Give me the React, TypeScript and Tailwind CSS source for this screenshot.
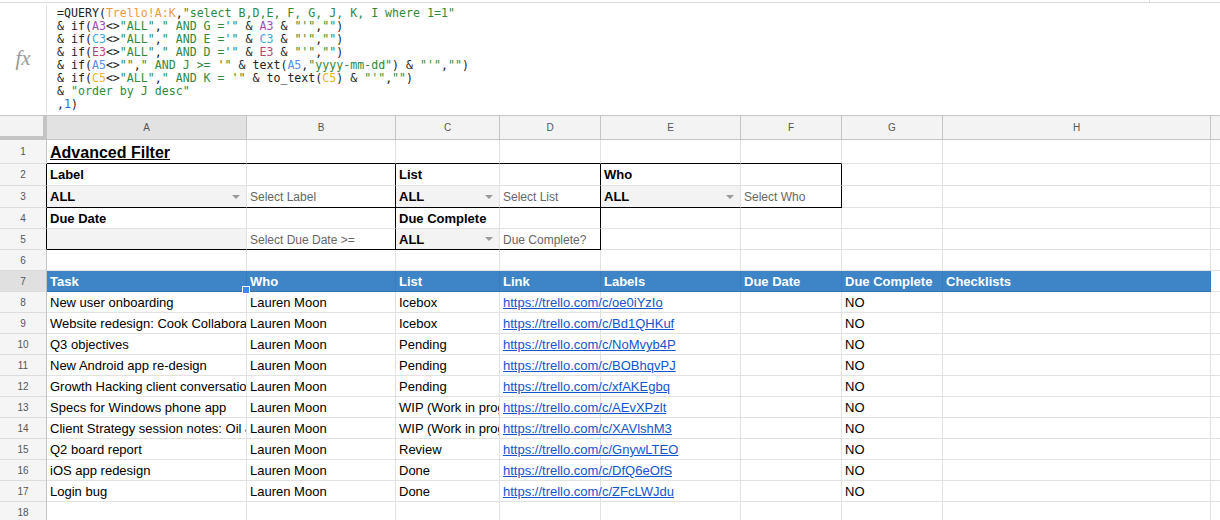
import React from 'react';

const colW = ['w-[200px]', 'w-[149px]', 'w-[104px]', 'w-[101px]', 'w-[140px]', 'w-[101px]', 'w-[101px]', 'w-[268px]'];
const letters = ['A', 'B', 'C', 'D', 'E', 'F', 'G', 'H'];

type Kind = 'plain' | 'bold' | 'title' | 'ph' | 'dd' | 'date' | 'link' | 'head';
type C = { t?: string; k?: Kind; rb?: boolean; bb?: boolean };
type Row = { n: number; h: string; cells: C[]; rhBlack?: boolean; sel?: boolean };

const textCls: Record<Kind, string> = {
  plain: 'text-[13px] text-black',
  bold: 'text-[13px] font-bold text-black',
  title: 'text-[16px] font-bold underline text-black pt-[2px]',
  ph: 'text-[12px] text-[#666]',
  dd: 'text-[13px] font-bold text-black',
  date: 'text-[13px] text-black',
  link: 'text-[13px] text-[#1155cc] underline',
  head: 'text-[13px] font-bold text-white',
};

const Cell = ({ c, i, sel, low }: { c: C; i: number; sel?: boolean; low?: boolean }) => {
  const k = c.k ?? 'plain';
  const head = k === 'head';
  const dd = k === 'dd';
  // links spill into the empty Labels column, like Sheets does
  const spill = k === 'link';
  return (
    <div
      className={`relative shrink-0 ${colW[i]} flex items-center border-r border-b ${low ? 'pt-[2px]' : ''} ${
        c.rb ? 'border-r-black' : head ? 'border-r-[#3a7cba]' : 'border-r-[#e2e2e2]'
      } ${c.bb ? 'border-b-black' : head ? 'border-b-[#3272ad]' : 'border-b-[#e2e2e2]'} ${
        head ? 'bg-[#3d85c6]' : dd || k === 'date' ? 'bg-[#f3f3f3]' : ''
      }`}
    >
      <span
        className={`block whitespace-nowrap px-[3px] leading-[16px] ${textCls[k]} ${
          spill ? 'relative z-[1] overflow-visible' : 'w-full overflow-hidden'
        }`}
      >
        {c.t}
      </span>
      {dd && (
        <svg className="absolute right-[6px] top-1/2 -translate-y-1/2" width="8" height="4" viewBox="0 0 8 4">
          <path d="M0 0h8L4 4z" fill="#9a9a9a" />
        </svg>
      )}
      {sel && <div className="absolute -right-[4px] -bottom-[3px] z-10 h-[8px] w-[8px] border border-white bg-[#4285f4]" />}
    </div>
  );
};

const e: C = {};
const tasks: [string, string, string][] = [
  ['New user onboarding', 'Icebox', 'oe0iYzIo'],
  ['Website redesign: Cook Collaborative', 'Icebox', 'Bd1QHKuf'],
  ['Q3 objectives', 'Pending', 'NoMvyb4P'],
  ['New Android app re-design', 'Pending', 'BOBhqvPJ'],
  ['Growth Hacking client conversation', 'Pending', 'xfAKEgbq'],
  ['Specs for Windows phone app', 'WIP (Work in progress)', 'AEvXPzlt'],
  ['Client Strategy session notes: Oil & Gas', 'WIP (Work in progress)', 'XAVlshM3'],
  ['Q2 board report', 'Review', 'GnywLTEO'],
  ['iOS app redesign', 'Done', 'DfQ6eOfS'],
  ['Login bug', 'Done', 'ZFcLWJdu'],
];

const rows: Row[] = [
  {
    n: 1,
    h: 'h-[24px]',
    cells: [
      { t: 'Advanced Filter', k: 'title', bb: true },
      { bb: true },
      { bb: true },
      { bb: true },
      { bb: true },
      { bb: true },
      e,
      e,
    ],
  },
  {
    n: 2,
    h: 'h-[22px]',
    rhBlack: true,
    cells: [
      { t: 'Label', k: 'bold' },
      { rb: true },
      { t: 'List', k: 'bold' },
      { rb: true },
      { t: 'Who', k: 'bold' },
      { rb: true },
      e,
      e,
    ],
  },
  {
    n: 3,
    h: 'h-[22px]',
    rhBlack: true,
    cells: [
      { t: 'ALL', k: 'dd', bb: true },
      { t: 'Select Label', k: 'ph', rb: true, bb: true },
      { t: 'ALL', k: 'dd', bb: true },
      { t: 'Select List', k: 'ph', rb: true, bb: true },
      { t: 'ALL', k: 'dd', bb: true },
      { t: 'Select Who', k: 'ph', rb: true, bb: true },
      e,
      e,
    ],
  },
  {
    n: 4,
    h: 'h-[21px]',
    rhBlack: true,
    cells: [{ t: 'Due Date', k: 'bold' }, { rb: true }, { t: 'Due Complete', k: 'bold' }, { rb: true }, e, e, e, e],
  },
  {
    n: 5,
    h: 'h-[21px]',
    rhBlack: true,
    cells: [
      { k: 'date', bb: true, t: '' },
      { t: 'Select Due Date >=', k: 'ph', rb: true, bb: true },
      { t: 'ALL', k: 'dd', bb: true },
      { t: 'Due Complete?', k: 'ph', rb: true, bb: true },
      e,
      e,
      e,
      e,
    ],
  },
  { n: 6, h: 'h-[21px]', cells: [e, e, e, e, e, e, e, e] },
  {
    n: 7,
    h: 'h-[21px]',
    sel: true,
    cells: ['Task', 'Who', 'List', 'Link', 'Labels', 'Due Date', 'Due Complete', 'Checklists'].map((t) => ({ t, k: 'head' as Kind })),
  },
  ...tasks.map(([task, list, id], i) => ({
    n: 8 + i,
    h: 'h-[21px]',
    cells: [
      { t: task },
      { t: 'Lauren Moon' },
      { t: list },
      { t: `https://trello.com/c/${id}`, k: 'link' as Kind },
      e,
      e,
      { t: 'NO' },
      e,
    ],
  })),
  { n: 18, h: 'h-[21px]', cells: [e, e, e, e, e, e, e, e] },
];

const or = 'text-[#ee9a3a]';
const pu = 'text-[#a04fb3]';
const cy = 'text-[#3ea8d6]';
const ro = 'text-[#b4497a]';
const bl = 'text-[#5b8ee6]';
const ye = 'text-[#f0b31c]';
const gr = 'text-[#2f8a3a]';
const nb = 'text-[#3367d6]';

const S = ({ c, t }: { c: string; t: string }) => <span className={c}>{t}</span>;

const Formula = () => (
  <div className="whitespace-pre font-['DejaVu_Sans_Mono',monospace] text-[11.6px] leading-[13px] text-[#222]">
    <div>
      {'=QUERY('}
      <S c={or} t="Trello!A:K" />
      {','}
      <S c={gr} t={'"select B,D,E, F, G, J, K, I where 1=1"'} />
    </div>
    <div>
      {'& if('}
      <S c={pu} t="A3" />
      {'<>'}
      <S c={gr} t={'"ALL"'} />
      {','}
      <S c={gr} t={`" AND G ='"`} />
      {' & '}
      <S c={pu} t="A3" />
      {' & '}
      <S c={gr} t={`"'"`} />
      {','}
      <S c={gr} t={'""'} />
      {')'}
    </div>
    <div>
      {'& if('}
      <S c={cy} t="C3" />
      {'<>'}
      <S c={gr} t={'"ALL"'} />
      {','}
      <S c={gr} t={`" AND E ='"`} />
      {' & '}
      <S c={cy} t="C3" />
      {' & '}
      <S c={gr} t={`"'"`} />
      {','}
      <S c={gr} t={'""'} />
      {')'}
    </div>
    <div>
      {'& if('}
      <S c={ro} t="E3" />
      {'<>'}
      <S c={gr} t={'"ALL"'} />
      {','}
      <S c={gr} t={`" AND D ='"`} />
      {' & '}
      <S c={ro} t="E3" />
      {' & '}
      <S c={gr} t={`"'"`} />
      {','}
      <S c={gr} t={'""'} />
      {')'}
    </div>
    <div>
      {'& if('}
      <S c={bl} t="A5" />
      {'<>'}
      <S c={gr} t={'""'} />
      {','}
      <S c={gr} t={`" AND J >= '"`} />
      {' & text('}
      <S c={bl} t="A5" />
      {','}
      <S c={gr} t={'"yyyy-mm-dd"'} />
      {') & '}
      <S c={gr} t={`"'"`} />
      {','}
      <S c={gr} t={'""'} />
      {')'}
    </div>
    <div>
      {'& if('}
      <S c={ye} t="C5" />
      {'<>'}
      <S c={gr} t={'"ALL"'} />
      {','}
      <S c={gr} t={`" AND K = '"`} />
      {' & to_text('}
      <S c={ye} t="C5" />
      {') & '}
      <S c={gr} t={`"'"`} />
      {','}
      <S c={gr} t={'""'} />
      {')'}
    </div>
    <div>
      {'& '}
      <S c={gr} t={'"order by J desc"'} />
    </div>
    <div>
      {','}
      <S c={nb} t="1" />
      {')'}
    </div>
  </div>
);

export default function App() {
  return (
    <div className="h-[520px] w-[1220px] overflow-hidden bg-white font-['Liberation_Sans',Arial,sans-serif]">
      <div className="flex h-[3px] border-b border-[#dadada]">
        <div className="ml-[1149px] h-[2px] w-px bg-[#dadada]" />
      </div>

      <div className="flex h-[113px] border-b border-[#c4c4c4]">
        <div className="flex w-[46px] shrink-0 items-center justify-center">
          <span className="font-['Liberation_Serif',serif] text-[21px] italic text-[#9a9a9a]">fx</span>
        </div>
        <div className="my-[2px] w-px bg-[#e0e0e0]" />
        <div className="pl-[10px] pt-[4px]">
          <Formula />
        </div>
      </div>

      <div className="flex h-[24px]">
        <div className="h-full w-[47px] shrink-0 border-r-4 border-b-4 border-[#c4c4c4] bg-[#f3f3f3]" />
        {letters.map((l, i) => (
          <div
            key={l}
            className={`${colW[i]} flex shrink-0 items-center justify-center border-r border-b border-[#c4c4c4] text-[10px] text-[#555] ${
              i === 0 ? 'bg-[#e2e2e2]' : 'bg-[#f3f3f3]'
            }`}
          >
            {l}
          </div>
        ))}
        <div className="flex-1 border-b border-[#c4c4c4] bg-[#f3f3f3]" />
      </div>

      {rows.map((r) => (
        <div key={r.n} className={`flex ${r.h}`}>
          <div
            className={`flex w-[47px] shrink-0 items-center justify-center border-r border-b border-b-[#dcdcdc] text-[10px] text-[#555] ${
              r.rhBlack ? 'border-r-black' : 'border-r-[#c4c4c4]'
            } ${r.sel ? 'bg-[#e0e0e0]' : 'bg-[#f5f5f5]'}`}
          >
            {r.n}
          </div>
          {r.cells.map((c, i) => (
            <Cell key={i} c={c} i={i} sel={r.sel && i === 0} low={r.n >= 4} />
          ))}
          <div className="flex-1 border-b border-[#e2e2e2] bg-white" />
        </div>
      ))}
    </div>
  );
}
